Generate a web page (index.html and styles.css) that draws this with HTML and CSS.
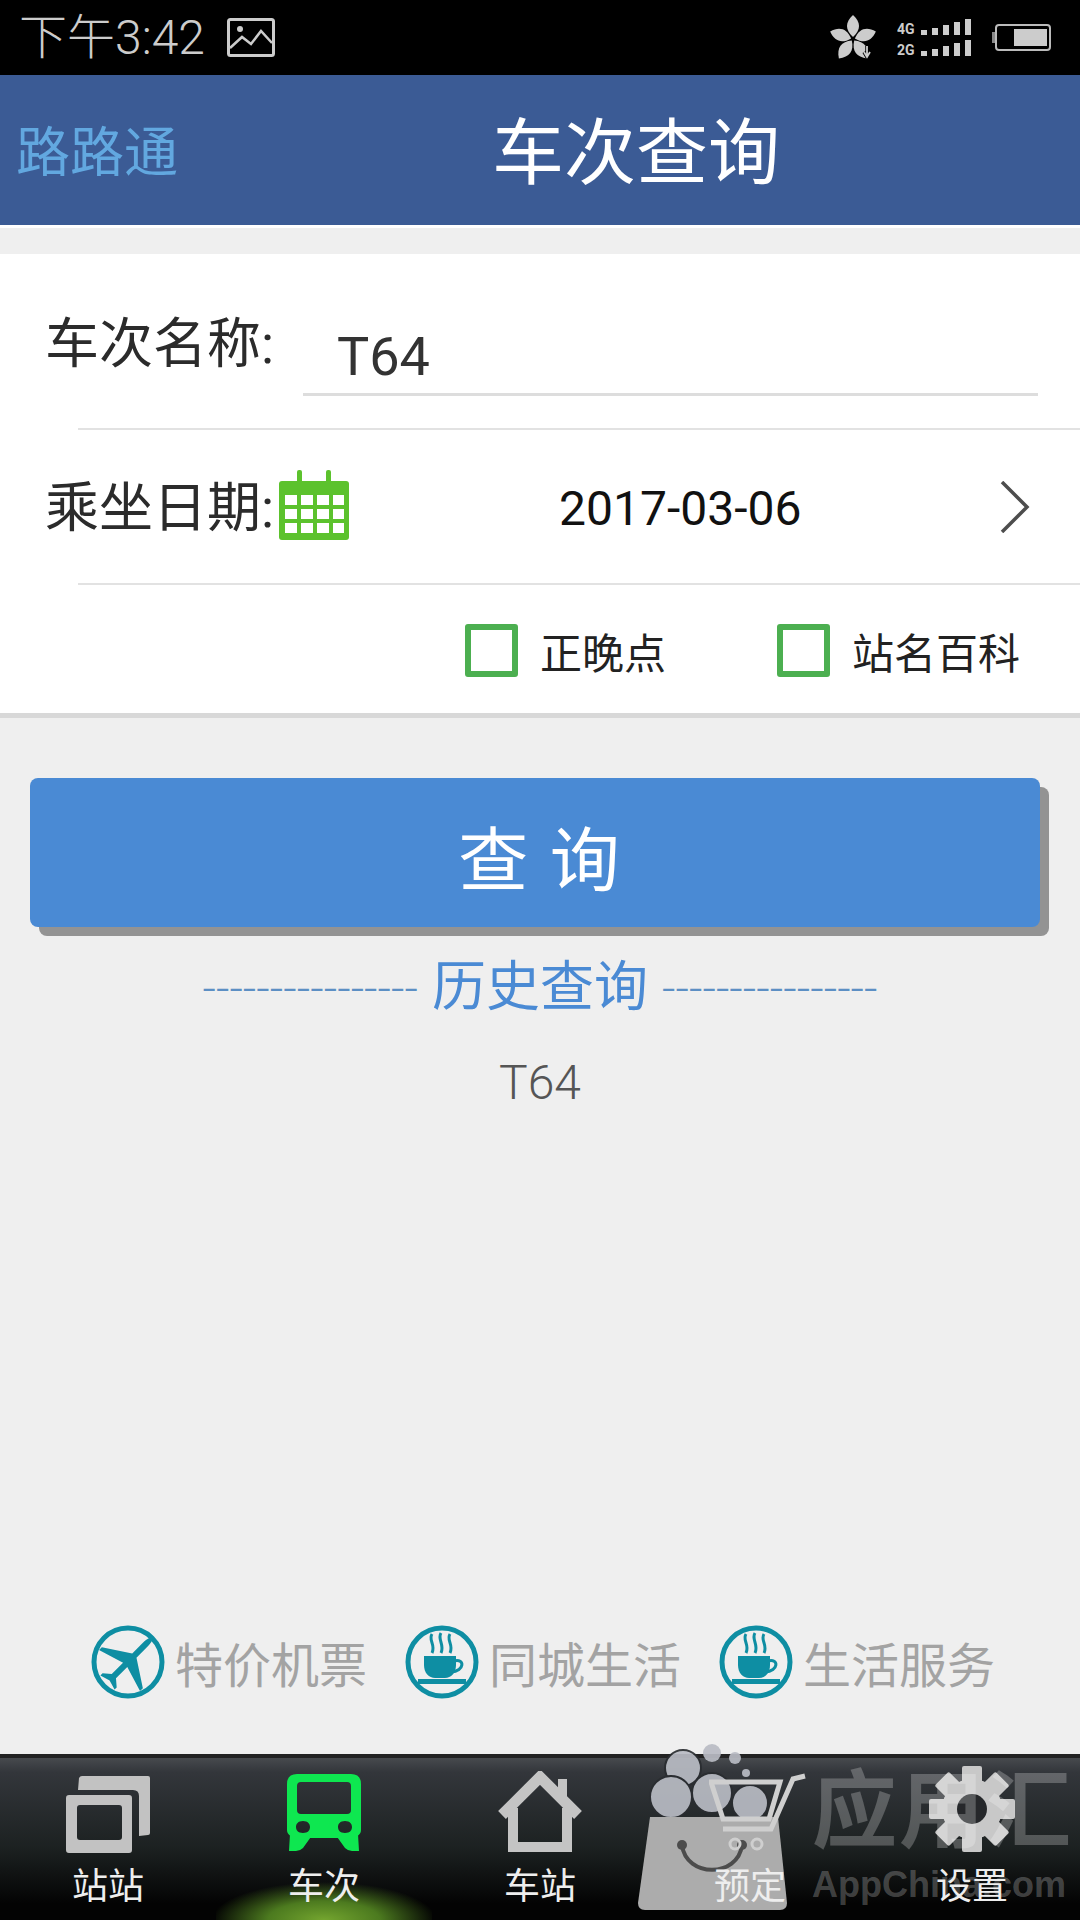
FILE: index.html
```html
<!DOCTYPE html>
<html lang="zh-CN">
<head>
    <meta charset="UTF-8">
    <meta name="viewport" content="width=device-width, initial-scale=1.0">
    <title>车次查询</title>
    <link rel="stylesheet" href="styles.css">
</head>
<body>
    <div class="status-bar">
        <span class="status-time">下午3:42</span>
        <svg class="status-image" viewBox="0 0 48 39">
            <rect x="1.5" y="1.5" width="45" height="36" rx="2" fill="none" stroke="#ccc" stroke-width="3"/>
            <circle cx="13" cy="11" r="3" fill="#ccc"/>
            <path d="M3 30 L15 19 L24 26 L34 13 L45 25" fill="none" stroke="#ccc" stroke-width="2.5"/>
        </svg>
        <div class="status-right">
            <svg class="status-flower" viewBox="0 0 50 46">
                <g fill="#ccc">
                    <path d="M25 22 C17 15 17 7 25 0 C33 7 33 15 25 22 Z"/>
                    <path d="M25 22 C17 15 17 7 25 0 C33 7 33 15 25 22 Z" transform="rotate(72 25 24)"/>
                    <path d="M25 22 C17 15 17 7 25 0 C33 7 33 15 25 22 Z" transform="rotate(144 25 24)"/>
                    <path d="M25 22 C17 15 17 7 25 0 C33 7 33 15 25 22 Z" transform="rotate(216 25 24)"/>
                    <path d="M25 22 C17 15 17 7 25 0 C33 7 33 15 25 22 Z" transform="rotate(288 25 24)"/>
                </g>
                <path d="M39 31 V41 M36 37 L39 42 L42 37" fill="none" stroke="#000" stroke-width="3.5"/>
                <path d="M39 31 V41 M36 37 L39 42 L42 37" fill="none" stroke="#ccc" stroke-width="1.8"/>
            </svg>
            <svg class="status-signal" viewBox="0 0 76 38">
                <g fill="#ccc">
                    <text x="0" y="15" class="signal-text">4G</text>
                    <rect x="24" y="11" width="6" height="5"/><rect x="35" y="9" width="6" height="7"/><rect x="46" y="6" width="6" height="10"/><rect x="57" y="3" width="6" height="13"/><rect x="68" y="0" width="6" height="16"/>
                    <text x="0" y="36" class="signal-text">2G</text>
                    <rect x="24" y="32" width="6" height="5"/><rect x="35" y="30" width="6" height="7"/><rect x="46" y="27" width="6" height="10"/><rect x="57" y="24" width="6" height="13"/><rect x="68" y="21" width="6" height="16"/>
                </g>
            </svg>
            <svg class="status-battery" viewBox="0 0 59 27">
                <rect x="0" y="8" width="3" height="11" fill="#888"/>
                <rect x="4" y="1" width="54" height="25" rx="3" fill="none" stroke="#bbb" stroke-width="2"/>
                <rect x="22" y="5" width="33" height="17" fill="#ccc"/>
            </svg>
        </div>
    </div>

    <div class="header">
        <span class="header-logo">路路通</span>
        <h1 class="header-title">车次查询</h1>
    </div>

    <div class="main">
        <div class="form-card">
            <div class="row-name">
                <label class="form-label">车次名称:</label>
                <div class="name-field">T64</div>
            </div>
            <div class="divider"></div>
            <div class="row-date">
                <label class="form-label">乘坐日期:</label>
                <svg class="icon-calendar" viewBox="0 0 70 70">
                    <rect x="0" y="11" width="70" height="59" rx="3" fill="#5cc22d"/>
                    <rect x="18" y="0" width="5" height="20" rx="2" fill="#5cc22d"/>
                    <rect x="47" y="0" width="5" height="20" rx="2" fill="#5cc22d"/>
                    <g fill="#fff">
                        <rect x="6" y="25" width="12" height="10"/><rect x="22" y="25" width="12" height="10"/><rect x="38" y="25" width="12" height="10"/><rect x="54" y="25" width="11" height="10"/>
                        <rect x="6" y="39" width="12" height="10"/><rect x="22" y="39" width="12" height="10"/><rect x="38" y="39" width="12" height="10"/><rect x="54" y="39" width="11" height="10"/>
                        <rect x="6" y="53" width="12" height="10"/><rect x="22" y="53" width="12" height="10"/><rect x="38" y="53" width="12" height="10"/><rect x="54" y="53" width="11" height="10"/>
                    </g>
                </svg>
                <span class="date-value">2017-03-06</span>
                <svg class="icon-chevron" viewBox="0 0 30 52">
                    <path d="M2 1 L27 26 L2 51" fill="none" stroke="#4d4d4d" stroke-width="3.5"/>
                </svg>
            </div>
            <div class="divider"></div>
            <div class="row-check">
                <div class="check-item">
                    <span class="check-box"></span>
                    <span>正晚点</span>
                </div>
                <div class="check-item">
                    <span class="check-box"></span>
                    <span>站名百科</span>
                </div>
            </div>
        </div>

        <button class="query-btn">查 询</button>

        <div class="history-title">
            <span class="history-dash">----------------</span>
            <span>历史查询</span>
            <span class="history-dash">----------------</span>
        </div>
        <div class="history-item">T64</div>

        <div class="ad-row">
            <div class="ad-item">
                <svg class="ad-icon" viewBox="0 0 74 74">
                    <circle cx="37" cy="37" r="34" fill="none" stroke="#0e8ea3" stroke-width="5"/>
                    <path transform="rotate(45 37 37)" fill="#0e8ea3" d="M37 3 C39 3 40 8 40 14 V28 L66 45 V49 L40 41 V57 L47 63 V66 L37 63 L27 66 V63 L34 57 V41 L8 49 V45 L34 28 V14 C34 8 35 3 37 3 Z"/>
                </svg>
                <span>特价机票</span>
            </div>
            <div class="ad-item">
                <svg class="ad-icon" viewBox="0 0 74 74">
                    <circle cx="37" cy="37" r="34" fill="none" stroke="#0e8ea3" stroke-width="5"/>
                    <g fill="none" stroke="#0e8ea3" stroke-width="3">
                        <path d="M27 9 C23 15 31 20 27 28"/>
                        <path d="M36 8 C32 14 40 20 36 28"/>
                        <path d="M45 9 C41 15 49 20 45 28"/>
                        <path d="M49 36 C60 33 60 46 46 47"/>
                    </g>
                    <path fill="#0e8ea3" d="M19 31 H51 V40 C51 48 46 53 40 53 H30 C24 53 19 48 19 40 Z"/>
                    <rect x="13" y="54" width="48" height="5" fill="#0e8ea3"/>
                </svg>
                <span>同城生活</span>
            </div>
            <div class="ad-item">
                <svg class="ad-icon" viewBox="0 0 74 74">
                    <circle cx="37" cy="37" r="34" fill="none" stroke="#0e8ea3" stroke-width="5"/>
                    <g fill="none" stroke="#0e8ea3" stroke-width="3">
                        <path d="M27 9 C23 15 31 20 27 28"/>
                        <path d="M36 8 C32 14 40 20 36 28"/>
                        <path d="M45 9 C41 15 49 20 45 28"/>
                        <path d="M49 36 C60 33 60 46 46 47"/>
                    </g>
                    <path fill="#0e8ea3" d="M19 31 H51 V40 C51 48 46 53 40 53 H30 C24 53 19 48 19 40 Z"/>
                    <rect x="13" y="54" width="48" height="5" fill="#0e8ea3"/>
                </svg>
                <span>生活服务</span>
            </div>
        </div>
    </div>

    <div class="tab-bar">
        <div class="tab-item">
            <svg class="tab-icon icon-station" viewBox="0 0 84 78">
                <path fill="#c2c2c2" fill-rule="evenodd" d="M3 19 H63 Q66 19 66 22 V74 Q66 77 63 77 H3 Q0 77 0 74 V22 Q0 19 3 19 Z M14 29 Q11 29 11 32 V61 Q11 64 14 64 H53 Q56 64 56 61 V32 Q56 29 53 29 Z"/>
                <path fill="#c2c2c2" d="M13 2 Q14 0 16 0 H82 Q84 0 84 2 V57 Q84 59 82 59 L73 60 V20 Q73 14 67 14 H12 Z"/>
            </svg>
            <span>站站</span>
        </div>
        <div class="tab-item tab-active">
            <svg class="tab-icon icon-train" viewBox="0 0 74 78">
                <path fill="#0ee750" fill-rule="evenodd" d="M10 0 H64 Q74 0 74 10 V56 Q74 60 70 62 L56 64 H18 L4 62 Q0 60 0 56 V10 Q0 0 10 0 Z M14 8 Q10 8 10 12 V36 Q10 40 14 40 H60 Q64 40 64 36 V12 Q64 8 60 8 Z M16 47 C11 47 9 50 9 53 C9 56 11 59 16 59 C21 59 23 56 23 53 C23 50 21 47 16 47 Z M58 47 C53 47 51 50 51 53 C51 56 53 59 58 59 C63 59 65 56 65 53 C65 50 63 47 58 47 Z"/>
                <path fill="#0ee750" d="M3 60 H26 L16 74 Q13 77 9 77 H2 Z M48 60 H71 L72 77 H65 Q61 77 58 74 Z"/>
            </svg>
            <span>车次</span>
        </div>
        <div class="tab-item">
            <svg class="tab-icon icon-house" viewBox="0 0 84 81">
                <polyline points="4,44 42,6 80,44" fill="none" stroke="#c4c4c4" stroke-width="11"/>
                <polyline points="15,37 15,76 69,76 69,37" fill="none" stroke="#c4c4c4" stroke-width="10"/>
                <rect x="60" y="8" width="9" height="20" fill="#c4c4c4"/>
            </svg>
            <span>车站</span>
        </div>
        <div class="tab-item tab-book">
            <svg class="tab-icon icon-cart" viewBox="0 0 98 80">
                <g fill="none" stroke="#cfcfcf" stroke-width="5">
                    <path d="M96 4 L84 7 L62 57 H14"/>
                    <path d="M2 10 H71 L60 47 H14 Z"/>
                    <circle cx="26" cy="72" r="5" stroke-width="3"/>
                    <circle cx="48" cy="72" r="5" stroke-width="3"/>
                </g>
            </svg>
            <span>预定</span>
        </div>
        <div class="tab-item">
            <svg class="tab-icon icon-gear" viewBox="0 0 94 86">
                <g fill="#c8c8c8">
                    <circle cx="47" cy="43" r="30"/>
                    <rect x="37" y="0" width="20" height="86" rx="2"/>
                    <rect x="37" y="0" width="20" height="86" rx="2" transform="rotate(45 47 43)"/>
                    <rect x="37" y="0" width="20" height="86" rx="2" transform="rotate(90 47 43)"/>
                    <rect x="37" y="0" width="20" height="86" rx="2" transform="rotate(135 47 43)"/>
                </g>
                <circle cx="47" cy="43" r="15" fill="#26282b"/>
            </svg>
            <span>设置</span>
        </div>
    </div>

    <div class="watermark">
        <svg class="watermark-logo" viewBox="630 1740 190 180">
            <g fill="#b9bcc4" opacity="0.92" stroke="#2a2d31" stroke-width="2">
                <circle cx="683" cy="1768" r="18"/>
                <circle cx="712" cy="1793" r="20"/>
                <circle cx="750" cy="1803" r="18"/>
                <circle cx="671" cy="1797" r="21"/>
            </g>
            <g fill="#b9bcc4" opacity="0.92">
                <circle cx="712" cy="1753" r="9"/>
                <circle cx="735" cy="1758" r="6"/>
                <circle cx="746" cy="1773" r="4"/>
            </g>
            <path fill="#acacac" d="M650 1817 H778 L787 1903 Q787 1910 780 1910 H645 Q638 1910 638 1903 Z"/>
            <path d="M682 1845 C686 1878 738 1878 742 1845" fill="none" stroke="#4c4c4c" stroke-width="4"/>
            <circle cx="682" cy="1845" r="5" fill="#4c4c4c"/>
            <circle cx="742" cy="1845" r="5" fill="#4c4c4c"/>
        </svg>
        <div class="watermark-text">
            <span class="watermark-cn">应用汇</span>
            <span class="watermark-en">AppChina.com</span>
        </div>
    </div>
</body>
</html>
```

FILE: styles.css
```css
body {
    font-family: Roboto, "Noto Sans CJK SC", sans-serif;
    margin: 0;
    padding: 0;
    width: 1080px;
    height: 1920px;
    display: flex;
    flex-direction: column;
    position: relative;
    overflow: hidden;
    background-color: #efefef;
}

/* barra de estado */
.status-bar {
    height: 75px;
    background-color: #000;
    display: flex;
    align-items: center;
    padding: 0 29px 0 19px;
    color: #ccc;
    box-sizing: border-box;
}
.status-time {
    font-size: 48px;
    font-weight: 300;
    line-height: 1;
}
.status-image {
    width: 48px;
    height: 39px;
    margin-left: 22px;
}
.status-right {
    margin-left: auto;
    display: flex;
    align-items: center;
}
.status-flower {
    width: 50px;
    height: 46px;
}
.status-signal {
    width: 76px;
    height: 38px;
    margin-left: 19px;
}
.signal-text {
    font-size: 14px;
    font-weight: 700;
}
.status-battery {
    width: 59px;
    height: 27px;
    margin-left: 19px;
}

/* cabecera */
.header {
    height: 150px;
    background-color: #3b5b95;
    display: flex;
    align-items: center;
    padding-left: 16px;
    border-bottom: 3px solid #fff;
}
.header-logo {
    font-size: 54px;
    color: #62a8e0;
    margin-top: -4px;
}
.header-title {
    margin: -8px 0 0 314px;
    font-size: 72px;
    font-weight: 400;
    color: #fff;
}

.main {
    flex: 1;
    display: flex;
    flex-direction: column;
    padding-top: 26px;
    background-color: #efefef;
}

/* formulario */
.form-card {
    background-color: #fff;
    border-bottom: 5px solid #d8d8d8;
    height: 459px;
}
.form-label {
    font-size: 54px;
    line-height: 60px;
    color: #2b2b2b;
}
.row-name {
    height: 174px;
    display: flex;
    align-items: flex-start;
    padding: 61px 42px 0 45px;
    box-sizing: border-box;
}
.name-field {
    width: 735px;
    margin-left: auto;
    height: 84px;
    line-height: 80px;
    margin-top: -3px;
    padding: 5px 0 0 34px;
    box-sizing: border-box;
    border-bottom: 3px solid #ddd;
    font-size: 54px;
    color: #333;
}
.divider {
    height: 2px;
    margin-left: 78px;
    background-color: #e2e2e2;
}
.row-date {
    height: 153px;
    display: flex;
    align-items: center;
    padding: 0 50px 0 45px;
    box-sizing: border-box;
}
.row-date .form-label {
    margin-top: 4px;
}
.icon-calendar {
    width: 70px;
    height: 70px;
    margin: -3px 0 0 5px;
}
.date-value {
    font-size: 48px;
    color: #111;
    margin: 4px 0 0 210px;
}
.icon-chevron {
    width: 30px;
    height: 52px;
    margin-left: auto;
}
.row-check {
    height: 128px;
    display: flex;
    align-items: center;
    padding: 2px 0 0 465px;
    box-sizing: border-box;
    gap: 111px;
}
.check-item {
    display: flex;
    align-items: center;
    gap: 22px;
    font-size: 42px;
    color: #222;
}
.check-box {
    width: 53px;
    height: 53px;
    box-sizing: border-box;
    border: 6px solid #4caf50;
    border-radius: 3px;
}

/* boton */
.query-btn {
    display: block;
    width: 1010px;
    height: 149px;
    margin: 60px 0 0 30px;
    padding: 6px 0 0 8px;
    background-color: #4a8ad4;
    color: #fff;
    border: none;
    border-radius: 8px;
    box-shadow: 9px 9px 0 #939393;
    font-family: inherit;
    font-size: 70px;
    word-spacing: 4px;
}

/* historial */
.history-title {
    display: flex;
    justify-content: center;
    align-items: center;
    gap: 14px;
    margin-top: 26px;
    height: 70px;
    font-size: 54px;
    line-height: 70px;
    color: #4a8ad4;
}
.history-dash {
    font-size: 47px;
    font-weight: 300;
    color: #5c8fc4;
}
.history-item {
    margin-top: 30px;
    text-align: center;
    font-size: 48px;
    font-weight: 300;
    line-height: 60px;
    color: #555;
}

/* enlaces inferiores */
.ad-row {
    margin-top: auto;
    margin-bottom: 55px;
    padding-left: 91px;
    display: flex;
    gap: 38px;
}
.ad-item {
    display: flex;
    align-items: center;
    gap: 10px;
    font-size: 48px;
    color: #a3a3a3;
}
.ad-icon {
    width: 74px;
    height: 74px;
}

/* barra inferior */
.tab-bar {
    height: 166px;
    display: grid;
    grid-template-columns: repeat(5, 216px);
    border-top: 4px solid #222;
    box-sizing: border-box;
    background: linear-gradient(#474a4e 0, #33363b 14px, #1c2121 90px, #030303 146px);
}
.tab-item {
    display: flex;
    flex-direction: column;
    align-items: center;
    justify-content: flex-end;
    padding-bottom: 8px;
    font-size: 36px;
    line-height: 50px;
    color: #eee;
}
/* las etiquetas y el carrito quedan sobre la marca de agua */
.tab-item span,
.icon-cart {
    position: relative;
    z-index: 2;
}
.tab-active {
    background: radial-gradient(ellipse 112px 38px at 50% 100%, #74a52f 0, #4c7a1f 50%, rgba(30, 60, 10, 0) 100%);
}
.tab-book span {
    margin-right: 12px;
}
.tab-icon {
    margin-bottom: 10px;
}
.icon-station {
    width: 84px;
    height: 78px;
    margin-bottom: 8px;
}
.icon-train {
    width: 74px;
    height: 78px;
}
.icon-house {
    width: 84px;
    height: 81px;
}
.icon-cart {
    width: 98px;
    height: 80px;
    margin-left: 4px;
}
.icon-gear {
    width: 94px;
    height: 86px;
}

/* marca de agua */
.watermark {
    position: absolute;
    left: 630px;
    top: 1740px;
    display: flex;
    z-index: 1;
}
.watermark-logo {
    width: 190px;
    height: 180px;
}
.watermark-text {
    margin-left: -8px;
    display: flex;
    flex-direction: column;
    padding-top: 22px;
    font-weight: 700;
    color: rgba(255, 255, 255, 0.24);
    white-space: nowrap;
}
.watermark-cn {
    font-size: 85px;
    line-height: 100px;
    letter-spacing: 2px;
}
.watermark-en {
    font-size: 36px;
    line-height: 46px;
    font-family: "Liberation Sans", sans-serif;
}
```
